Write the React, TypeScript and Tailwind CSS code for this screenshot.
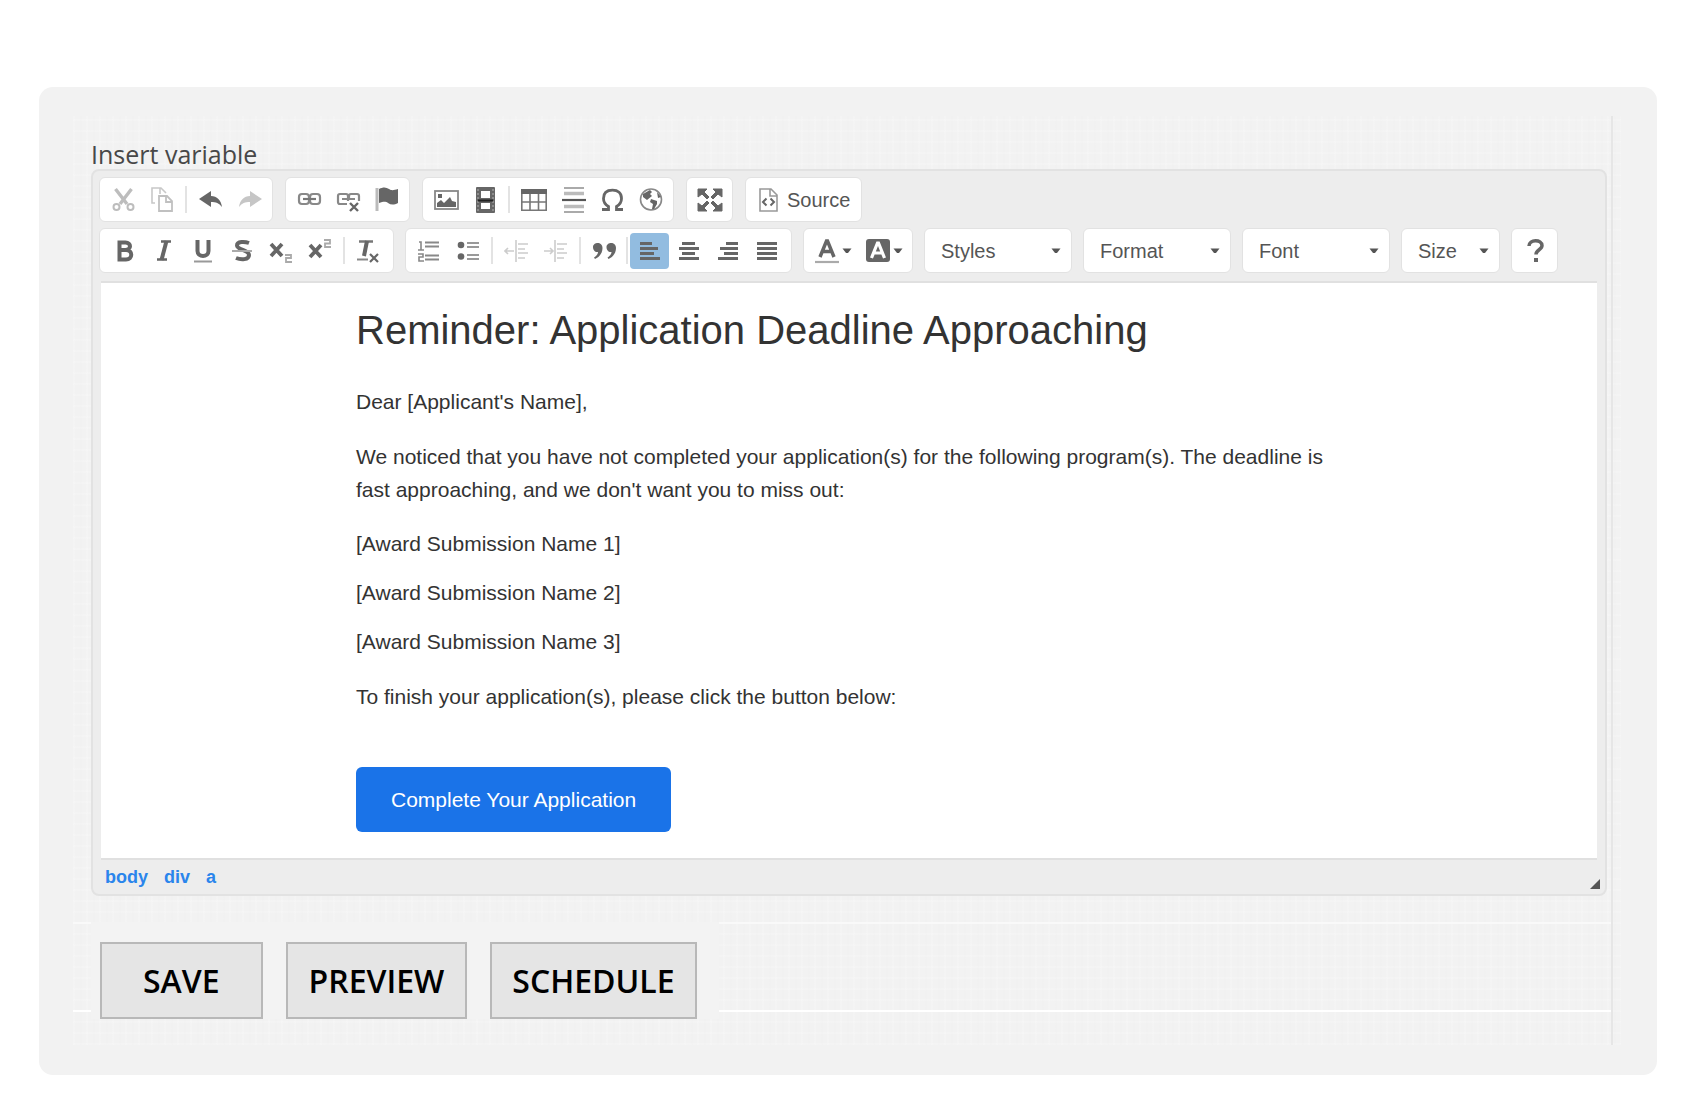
import type { ReactNode } from "react";

const G = "#666";

function Ico({ children, w = 26 }: { children: ReactNode; w?: number }) {
  return (
    <svg width={w} height={26} viewBox={`0 0 ${w} 26`} fill="none" aria-hidden="true">
      {children}
    </svg>
  );
}

function Tool({ label, active, children }: { label: string; active?: boolean; children: ReactNode }) {
  return (
    <button
      type="button"
      aria-label={label}
      aria-pressed={active}
      className={
        active
          ? "flex h-9 w-[39px] shrink-0 items-center justify-center rounded-sm bg-[#92bce0]"
          : "flex h-9 w-[39px] shrink-0 items-center justify-center rounded-sm"
      }
    >
      {children}
    </button>
  );
}

function Sep({ tight }: { tight?: boolean }) {
  return (
    <span
      className={tight ? "mx-0.5 h-[27px] w-0.5 shrink-0 bg-[#e3e3e3]" : "mx-1 h-[27px] w-0.5 shrink-0 bg-[#e3e3e3]"}
    />
  );
}

function Group({ children, pad = "px-[3px]" }: { children: ReactNode; pad?: string }) {
  return (
    <div className={`flex h-[45px] shrink-0 items-center rounded-md border border-[#e2e2e2] bg-white ${pad}`}>
      {children}
    </div>
  );
}

function Caret() {
  return (
    <svg width="10" height="6" viewBox="0 0 10 6" aria-hidden="true">
      <path d="M0.5 0.5h9L6 5H4z" fill="#555" />
    </svg>
  );
}

function Combo({ label, small }: { label: string; small?: boolean }) {
  return (
    <div
      className={
        small
          ? "relative h-[45px] w-[99px] shrink-0 rounded-md border border-[#e2e2e2] bg-white"
          : "relative h-[45px] w-[148px] shrink-0 rounded-md border border-[#e2e2e2] bg-white"
      }
    >
      <select
        aria-label={label}
        className="h-full w-full appearance-none bg-transparent pr-6 pl-4 text-xl text-[#555] outline-none"
      >
        <option>{label}</option>
      </select>
      <span className="pointer-events-none absolute inset-y-0 right-2.5 flex items-center">
        <Caret />
      </span>
    </div>
  );
}

function TextColor({ label, children }: { label: string; children: ReactNode }) {
  return (
    <button type="button" aria-label={label} className="flex h-9 w-[51px] shrink-0 items-center gap-0.5 pl-[7px]">
      {children}
      <Caret />
    </button>
  );
}

function Lines({ rows }: { rows: [number, number][] }) {
  return (
    <Ico>
      {rows.map(([x, w], i) => (
        <rect key={i} x={x} y={4 + i * 5} width={w} height={3} fill={G} />
      ))}
    </Ico>
  );
}

function Action({ children, pad }: { children: ReactNode; pad: string }) {
  return (
    <button
      type="button"
      className={`h-[77px] border-2 border-[#b8b8b8] bg-[#e5e5e5] font-['Open_Sans',sans-serif] text-[32px] font-semibold text-black ${pad}`}
    >
      {children}
    </button>
  );
}

export default function App() {
  return (
    <div className="min-h-screen bg-white pt-[87px] pr-[37px] pb-[39px] pl-[39px] font-['Liberation_Sans',Arial,sans-serif]">
      <main className="rounded-[14px] bg-[#f2f2f2] pt-[29px] pr-9 pb-[30px] pl-[34px]">
        <div className="bg-[repeating-linear-gradient(90deg,rgba(255,255,255,0.14)_0_2px,transparent_2px_7px,rgba(0,0,0,0.003)_7px_9px,transparent_9px_13px),repeating-linear-gradient(0deg,rgba(255,255,255,0.14)_0_2px,transparent_2px_11px)] pr-2">
          <div className="border-r-2 border-[#e6e6e6] pt-[22px] pb-[33px]">
            <div className="mr-1 ml-[18px]">
              <h2 className="h-[31px] font-['Open_Sans',sans-serif] text-[25px] leading-8 text-[#484848]">
                Insert variable
              </h2>

              <section className="rounded-lg border-2 border-[#e2e2e2] bg-[#ededed] px-2">
                <div className="-mx-0.5 flex flex-col gap-1.5 pt-1.5 pb-2" role="toolbar" aria-label="Editor toolbar">
                  <div className="flex flex-wrap gap-3">
                    <Group>
                      <Tool label="Cut">
                        <Ico>
                          <path d="M5.5 2L17 17M21.500 2L10 17" stroke="#bdbdbd" strokeWidth="3.400" />
                          <circle cx="6.500" cy="20" r="3" stroke="#bdbdbd" strokeWidth="2" />
                          <circle cx="20.500" cy="20" r="3" stroke="#bdbdbd" strokeWidth="2" />
                        </Ico>
                      </Tool>
                      <Tool label="Copy">
                        <Ico>
                          <path d="M6 16H3V1h9l5 5M11 1v6" stroke="#c8c8c8" strokeWidth="1.600" />
                          <path d="M10 9h8l5 5v10H10zM17 9v6h6" stroke="#c0c0c0" strokeWidth="1.800" />
                        </Ico>
                      </Tool>
                      <Sep />
                      <Tool label="Undo">
                        <Ico>
                          <path d="M1 12L13 4v5c6 0 10 4 11 11-3-4-6-5-11-5v5z" fill={G} />
                        </Ico>
                      </Tool>
                      <Tool label="Redo">
                        <Ico>
                          <path d="M25 12L13 4v5C7 9 3 13 2 20c3-4 6-5 11-5v5z" fill="#c6c6c6" />
                        </Ico>
                      </Tool>
                    </Group>
                    <Group>
                      <Tool label="Link">
                        <Ico>
                          <rect x="3" y="7" width="10" height="10" rx="3" stroke="#888" strokeWidth="2.200" />
                          <rect x="14" y="7" width="10" height="10" rx="3" stroke="#888" strokeWidth="2.200" />
                          <path d="M7 12h13" stroke="#777" strokeWidth="2.200" />
                        </Ico>
                      </Tool>
                      <Tool label="Unlink">
                        <Ico>
                          <path
                            d="M12 17H5a2 2 0 0 1-2-2V9a2 2 0 0 1 2-2h6a2 2 0 0 1 2 2v5M14 11V9a2 2 0 0 1 2-2h6a2 2 0 0 1 2 2v5M7 12h13"
                            stroke="#888"
                            strokeWidth="2.200"
                          />
                          <path d="M15 16l8 8M23 16l-8 8" stroke={G} strokeWidth="2.400" />
                        </Ico>
                      </Tool>
                      <Tool label="Anchor">
                        <Ico>
                          <path d="M3 1v23" stroke="#bbb" strokeWidth="3" />
                          <path d="M5 2c4-2 7-2 10 0s5 1 9 0v14c-4 2-7 2-10 0s-5-1-9 0z" fill={G} />
                        </Ico>
                      </Tool>
                    </Group>
                    <Group>
                      <Tool label="Image">
                        <Ico>
                          <rect x="2" y="4" width="23" height="18" stroke="#888" strokeWidth="1.800" />
                          <rect x="5" y="7" width="4" height="4" fill={G} />
                          <path d="M4 20v-4l4-3 3 3 6-6 2 4 4 1v5z" fill={G} />
                        </Ico>
                      </Tool>
                      <Tool label="Video">
                        <Ico>
                          <rect x="4" width="19" height="26" rx="1" fill={G} />
                          <path d="M9 4h9v7H9zM9 16h9v6H9z" fill="#fff" />
                          <path d="M6 2v22M21 2v22" stroke="#999" strokeWidth="1.500" strokeDasharray="2 2" />
                          <path d="M6 13.500h15" stroke="#222" strokeWidth="2" />
                        </Ico>
                      </Tool>
                      <Sep />
                      <Tool label="Table">
                        <Ico w={28}>
                          <rect x="1" y="2" width="26" height="5" fill={G} />
                          <path d="M1.800 7v16.200h24.400V7M10 7v16M18.500 7v16M2 15h24" stroke="#777" strokeWidth="1.600" />
                        </Ico>
                      </Tool>
                      <Tool label="Horizontal line">
                        <Ico>
                          <path d="M4 1h20M4 25h20" stroke="#aaa" strokeWidth="2" />
                          <path d="M4 6.500h20M4 19.500h20" stroke="#bbb" strokeWidth="3.500" />
                          <path d="M2 13h24" stroke="#555" strokeWidth="2.200" />
                        </Ico>
                      </Tool>
                      <Tool label="Special character">
                        <Ico>
                          <path
                            d="M3 22.500h6.500v-3C6 17.500 4.500 15 4.500 11.500 4.500 6 8 3.200 13.500 3.200s9 2.800 9 8.300c0 3.500-1.500 6-5 8v3H24"
                            stroke={G}
                            strokeWidth="2.800"
                          />
                        </Ico>
                      </Tool>
                      <Tool label="Frame">
                        <Ico>
                          <circle cx="13" cy="12.500" r="10.500" stroke="#888" strokeWidth="1.600" />
                          <path d="M5 7l7-4 2 2-2 2 2 2-5 4-4-3zM13 12l6 2v3l-3 5h-2l1-5-3-2zM19 5l4 5-3 1z" fill={G} />
                        </Ico>
                      </Tool>
                    </Group>
                    <Group>
                      <Tool label="Maximize">
                        <Ico>
                          <path
                            d="M1 2h9L7 5l5 5-2 2-5-5-4 3zM25 2h-9l3 3-5 5 2 2 5-5 4 3zM1 24h9l-3-3 5-5-2-2-5 5-4-3zM25 24h-9l3-3-5-5 2-2 5 5 4-3z"
                            fill={G}
                            stroke={G}
                          />
                        </Ico>
                      </Tool>
                    </Group>
                    <Group pad="px-[11px]">
                      <button type="button" className="flex items-center gap-2 text-xl text-[#555]">
                        <Ico w={22}>
                          <path d="M3 2h11l6 6v16H3zM13 2v7h7" stroke="#999" strokeWidth="1.600" />
                          <path
                            d="M9.500 11.500L6 15l3.500 3.500M13.500 11.500L17 15l-3.500 3.500"
                            stroke={G}
                            strokeWidth="2"
                          />
                        </Ico>
                        Source
                      </button>
                    </Group>
                  </div>

                  <div className="flex flex-wrap gap-[11px]">
                    <Group pad="px-[5px]">
                      <Tool label="Bold">
                        <Ico>
                          <path
                            d="M7.500 4.500v17M5.500 4.500h8c6 0 6 7.500 0 7.500H8h6c7 0 7 9.500 0 9.500H5.500"
                            stroke={G}
                            strokeWidth="4"
                          />
                        </Ico>
                      </Tool>
                      <Tool label="Italic">
                        <Ico>
                          <path d="M10 3.500h10M6 21.500h10" stroke={G} strokeWidth="2.500" />
                          <path d="M15.500 3l-5 19" stroke={G} strokeWidth="4" />
                        </Ico>
                      </Tool>
                      <Tool label="Underline">
                        <Ico>
                          <path d="M7.500 2v11c0 6.500 11 6.500 11 0V2" stroke={G} strokeWidth="4" />
                          <path d="M4 23.500h18" stroke="#999" strokeWidth="2" />
                        </Ico>
                      </Tool>
                      <Tool label="Strikethrough">
                        <Ico>
                          <path d="M20 5c-4-1.500-12-2-12 2.500S20 12 20 17s-8 5-13 3" stroke={G} strokeWidth="4" />
                          <path d="M3 13h20" stroke="#aaa" strokeWidth="2" />
                        </Ico>
                      </Tool>
                      <Tool label="Subscript">
                        <Ico>
                          <path d="M3 6l11 12M14 6L3 18" stroke={G} strokeWidth="3.800" />
                          <path d="M17 17h6v3h-5v4h6" stroke="#aaa" strokeWidth="1.800" />
                        </Ico>
                      </Tool>
                      <Tool label="Superscript">
                        <Ico>
                          <path d="M3 7l11 12M14 7L3 19" stroke={G} strokeWidth="3.800" />
                          <path d="M17 2h6v3.500h-5V9h6" stroke="#aaa" strokeWidth="1.800" />
                        </Ico>
                      </Tool>
                      <Sep />
                      <Tool label="Remove format">
                        <Ico>
                          <path d="M3 3.500h14" stroke="#777" strokeWidth="2.500" />
                          <path d="M11 3L8 18" stroke={G} strokeWidth="4" />
                          <path d="M1 21.500h11" stroke="#888" strokeWidth="2" />
                          <path d="M14 16l8 8M22 16l-8 8" stroke={G} strokeWidth="2.200" />
                        </Ico>
                      </Tool>
                    </Group>
                    <Group pad="pl-[3px] pr-[5px]">
                      <Tool label="Numbered list">
                        <Ico>
                          <path d="M3 4h2v8M2 12h6M2 16h5v3H3v4h5" stroke="#888" strokeWidth="1.600" />
                          <path d="M9 4.500h14M9 8.500h14M9 17.500h14M9 21.500h14" stroke="#888" strokeWidth="2" />
                        </Ico>
                      </Tool>
                      <Tool label="Bulleted list">
                        <Ico>
                          <circle cx="6" cy="7" r="3.300" fill={G} />
                          <circle cx="6" cy="18.500" r="3.300" fill={G} />
                          <path d="M12 5h12M12 9h12M12 17h12M12 21h12" stroke="#999" strokeWidth="2" />
                        </Ico>
                      </Tool>
                      <Sep />
                      <Tool label="Decrease indent">
                        <Ico>
                          <path
                            d="M12 2v22M1 13h9M4 10l-3 3 3 3M14 6h10M14 11h7M14 15h10M14 20h7"
                            stroke="#ccc"
                            strokeWidth="1.600"
                          />
                        </Ico>
                      </Tool>
                      <Tool label="Increase indent">
                        <Ico>
                          <path
                            d="M12 2v22M1 13h9M7 10l3 3-3 3M14 6h10M14 11h7M14 15h10M14 20h7"
                            stroke="#ccc"
                            strokeWidth="1.600"
                          />
                        </Ico>
                      </Tool>
                      <Sep />
                      <Tool label="Block quote">
                        <Ico>
                          <path
                            d="M1 9c0-5 9.500-6 9.500 1 0 5-3 9-7.500 11l-1-1.500c2.500-1.500 4-3.500 4-5.500C3 14.500 1 12 1 9zM14.500 9c0-5 9.500-6 9.500 1 0 5-3 9-7.500 11l-1-1.500c2.500-1.500 4-3.500 4-5.500-3 .5-5-2-5-5z"
                            fill={G}
                          />
                        </Ico>
                      </Tool>
                      <Sep tight />
                      <Tool label="Align left" active>
                        <Lines rows={[[3, 12], [3, 18], [3, 14], [3, 20]]} />
                      </Tool>
                      <Tool label="Align center">
                        <Lines rows={[[6, 13], [3, 20], [6, 13], [3, 20]]} />
                      </Tool>
                      <Tool label="Align right">
                        <Lines rows={[[11, 12], [5, 18], [9, 14], [3, 20]]} />
                      </Tool>
                      <Tool label="Justify">
                        <Lines rows={[[3, 20], [3, 20], [3, 20], [3, 20]]} />
                      </Tool>
                    </Group>
                    <Group>
                      <TextColor label="Text color">
                        <Ico>
                          <path d="M6 19l6.500-16h1L20 19M8.500 13.500h9" stroke={G} strokeWidth="3.500" />
                          <path d="M1 24h24" stroke="#aaa" strokeWidth="2.200" />
                        </Ico>
                      </TextColor>
                      <TextColor label="Background color">
                        <Ico>
                          <rect x="1" y="1" width="24" height="23" rx="3" fill={G} />
                          <path d="M6.500 20l6-15h1l6 15M9 15h8" stroke="#fff" strokeWidth="3.200" />
                        </Ico>
                      </TextColor>
                    </Group>
                    <Combo label="Styles" />
                    <Combo label="Format" />
                    <Combo label="Font" />
                    <Combo label="Size" small />
                    <Group>
                      <Tool label="About">
                        <Ico>
                          <path d="M7 8c0-7 13-7 13-.5 0 4.500-6 4-6 9" stroke={G} strokeWidth="3.500" />
                          <rect x="12" y="20" width="4" height="4" fill={G} />
                        </Ico>
                      </Tool>
                    </Group>
                  </div>
                </div>

                <article className="border-y-2 border-[#e0e0e0] bg-white px-6 pt-6 pb-[26px] text-[#333]">
                  <div className="mx-auto max-w-[986px] text-[21px] leading-[33px]">
                    <h1 className="mb-8 text-[40px] leading-[46px]">Reminder: Application Deadline Approaching</h1>
                    <p className="mb-[22px]">Dear [Applicant's Name],</p>
                    <p className="mb-[21px]">
                      We noticed that you have not completed your application(s) for the following program(s). The
                      deadline is fast approaching, and we don't want you to miss out:
                    </p>
                    <p className="mb-4">[Award Submission Name 1]</p>
                    <p className="mb-4">[Award Submission Name 2]</p>
                    <p className="mb-[22px]">[Award Submission Name 3]</p>
                    <p className="mb-[54px]">To finish your application(s), please click the button below:</p>
                    <a href="#complete" className="block w-fit rounded-md bg-[#1a73e8] px-[35px] py-4 text-white">
                      Complete Your Application
                    </a>
                  </div>
                </article>

                <footer className="flex h-[34px] items-center justify-between text-lg font-bold text-[#2a85ec]">
                  <nav aria-label="Element path" className="flex gap-4 pl-1">
                    <a href="#body">body</a>
                    <a href="#div">div</a>
                    <a href="#a">a</a>
                  </nav>
                  <svg width="12" height="12" viewBox="0 0 12 12" className="-mr-1 mb-1 self-end" aria-hidden="true">
                    <path d="M11 1v10H1z" fill="#555" />
                  </svg>
                </footer>
              </section>
            </div>

            <div className="mt-[26px] flex h-[90px] items-start border-t-2 border-b-2 border-t-[#f9f9f9] border-b-white">
              <div className="-mt-0.5 ml-[18px] flex gap-[23px] bg-[#f3f3f3] pt-[20px] pr-[22px] pl-[9px]">
                <Action pad="px-[41px]">SAVE</Action>
                <Action pad="px-[21px]">PREVIEW</Action>
                <Action pad="px-5">SCHEDULE</Action>
              </div>
            </div>
          </div>
        </div>
      </main>
    </div>
  );
}
